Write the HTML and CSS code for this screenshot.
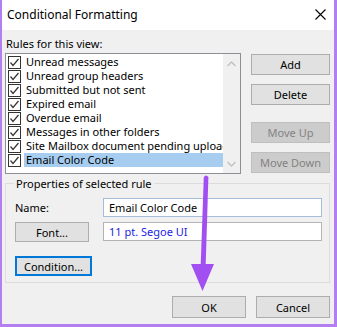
FILE: index.html
```html
<!DOCTYPE html>
<html lang="en">
<head>
  <meta charset="UTF-8" />
  <title>Conditional Formatting</title>
  <link rel="stylesheet" href="styles.css">
</head>
<body>

  <div class="window">
    <div class="titlebar">
      <span class="title">Conditional Formatting</span>
      <svg class="close" width="11" height="11" viewBox="0 0 11 11">
        <path d="M0.5 0.5 L10.5 10.5 M10.5 0.5 L0.5 10.5" stroke="#000" stroke-width="1.1" fill="none"/>
      </svg>
    </div>

    <div class="content">
      <div class="label">Rules for this view:</div>

      <div class="rules-row">
        <div class="listbox">
          <ul class="rules">
            <li><svg class="check" width="13" height="13" viewBox="0 0 13 13"><rect x="0.5" y="0.5" width="12" height="12" fill="#fff" stroke="#333"/><path d="M2.5 6.5 L5 9.5 L10.5 3" stroke="#333" stroke-width="1.2" fill="none"/></svg><span class="name">Unread messages</span></li>
            <li><svg class="check" width="13" height="13" viewBox="0 0 13 13"><rect x="0.5" y="0.5" width="12" height="12" fill="#fff" stroke="#333"/><path d="M2.5 6.5 L5 9.5 L10.5 3" stroke="#333" stroke-width="1.2" fill="none"/></svg><span class="name">Unread group headers</span></li>
            <li><svg class="check" width="13" height="13" viewBox="0 0 13 13"><rect x="0.5" y="0.5" width="12" height="12" fill="#fff" stroke="#333"/><path d="M2.5 6.5 L5 9.5 L10.5 3" stroke="#333" stroke-width="1.2" fill="none"/></svg><span class="name">Submitted but not sent</span></li>
            <li><svg class="check" width="13" height="13" viewBox="0 0 13 13"><rect x="0.5" y="0.5" width="12" height="12" fill="#fff" stroke="#333"/><path d="M2.5 6.5 L5 9.5 L10.5 3" stroke="#333" stroke-width="1.2" fill="none"/></svg><span class="name">Expired email</span></li>
            <li><svg class="check" width="13" height="13" viewBox="0 0 13 13"><rect x="0.5" y="0.5" width="12" height="12" fill="#fff" stroke="#333"/><path d="M2.5 6.5 L5 9.5 L10.5 3" stroke="#333" stroke-width="1.2" fill="none"/></svg><span class="name">Overdue email</span></li>
            <li><svg class="check" width="13" height="13" viewBox="0 0 13 13"><rect x="0.5" y="0.5" width="12" height="12" fill="#fff" stroke="#333"/><path d="M2.5 6.5 L5 9.5 L10.5 3" stroke="#333" stroke-width="1.2" fill="none"/></svg><span class="name">Messages in other folders</span></li>
            <li><svg class="check" width="13" height="13" viewBox="0 0 13 13"><rect x="0.5" y="0.5" width="12" height="12" fill="#fff" stroke="#333"/><path d="M2.5 6.5 L5 9.5 L10.5 3" stroke="#333" stroke-width="1.2" fill="none"/></svg><span class="name">Site Mailbox document pending upload</span></li>
            <li class="selected"><svg class="check" width="13" height="13" viewBox="0 0 13 13"><rect x="0.5" y="0.5" width="12" height="12" fill="#fff" stroke="#333"/><path d="M2.5 6.5 L5 9.5 L10.5 3" stroke="#333" stroke-width="1.2" fill="none"/></svg><span class="name">Email Color Code</span></li>
          </ul>
          <div class="scrollbar">
            <svg width="17" height="17" viewBox="0 0 17 17"><path d="M4.5 10 L8.5 6 L12.5 10" stroke="#c2c2c2" stroke-width="1.4" fill="none"/></svg>
            <svg width="17" height="17" viewBox="0 0 17 17"><path d="M4.5 7 L8.5 11 L12.5 7" stroke="#c2c2c2" stroke-width="1.4" fill="none"/></svg>
          </div>
        </div>

        <div class="side-buttons">
          <button class="btn">Add</button>
          <button class="btn">Delete</button>
          <button class="btn disabled">Move Up</button>
          <button class="btn disabled">Move Down</button>
        </div>
      </div>

      <div class="group">
        <div class="group-title">Properties of selected rule</div>
        <div class="field-row">
          <span class="field-label">Name:</span>
          <div class="textbox name-box">Email Color Code</div>
        </div>
        <div class="field-row font-row">
          <button class="btn font-btn">Font...</button>
          <div class="textbox font-box">11 pt. Segoe UI</div>
        </div>
        <button class="btn condition-btn">Condition...</button>
      </div>

      <div class="footer">
        <button class="btn">OK</button>
        <button class="btn">Cancel</button>
      </div>
    </div>

    <!-- annotation arrow -->
    <svg class="arrow" width="337" height="327" viewBox="0 0 337 327">
      <path d="M203.8 177 Q206 174 208.4 177 L205.6 268 L200.6 268 Z" fill="#a24ff2"/>
      <path d="M191 264 L214 264 L202.5 291 Z" fill="#a24ff2"/>
    </svg>
  </div>

</body>
</html>
```

FILE: styles.css
```css
/* ---------------- GENERAL ---------------- */
html, body {
  margin: 0;
  background: #f0f0f0;
}

body {
  font-family: 'Noto Sans', 'Open Sans', sans-serif;
  font-size: 11px;
  color: #000;
}

.window {
  position: relative;
  width: 337px;
  height: 327px;
  box-sizing: border-box;
  border-left: 2px solid #b27ef0;
  border-right: 3px solid #b27ef0;
  border-bottom: 3px solid #b27ef0;
  background: #f0f0f0;
  display: flex;
  flex-direction: column;
}

/* ---------------- TITLE BAR ---------------- */
.titlebar {
  height: 30px;
  flex-shrink: 0;
  background: #fff;
  display: flex;
  align-items: center;
  justify-content: space-between;
  padding: 0 8px 0 5px;
}

.title {
  font-size: 12px;
  line-height: 16px;
  padding-bottom: 1px;
}

.close {
  display: block;
  margin-bottom: 2px;
}

/* ---------------- CONTENT ---------------- */
.content {
  padding: 6px 4px 0 3px;
}

.label {
  line-height: 15px;
  padding-left: 1px;
}

.rules-row {
  display: flex;
  gap: 10px;
  margin-top: 2px;
}

.listbox {
  width: 236px;
  height: 121px;
  box-sizing: border-box;
  border: 1px solid #8c8f96;
  background: #fff;
  display: flex;
}

.rules {
  list-style: none;
  margin: 0;
  padding: 1px 0 0 2px;
  flex: 1;
  overflow: hidden;
}

.rules li {
  display: flex;
  align-items: center;
  height: 14px;
  white-space: nowrap;
}

.check {
  flex-shrink: 0;
  margin-right: 3px;
}

.name {
  flex: 1;
  line-height: 14px;
  padding-left: 2px;
  overflow: hidden;
}

.selected .name {
  background: #a6cdf0;
}

.scrollbar {
  width: 17px;
  background: #f0f0f0;
  display: flex;
  flex-direction: column;
  justify-content: space-between;
  padding: 2px 0 1px;
}

.scrollbar svg {
  display: block;
}

/* ---------------- BUTTONS ---------------- */
.btn {
  font-family: inherit;
  font-size: 11px;
  color: #000;
  background: #e1e1e1;
  border: 1px solid #adadad;
  margin: 0;
  padding: 0;
  height: 21px;
  line-height: 17px;
}

.btn.disabled {
  background: #cccccc;
  border-color: #bfbfbf;
  color: #838383;
}

.side-buttons {
  width: 79px;
  display: flex;
  flex-direction: column;
}

.side-buttons .btn {
  margin-top: 9px;
}

.side-buttons .btn:first-child {
  margin-top: 1px;
}

.side-buttons .btn:nth-child(3) {
  margin-top: 17px;
}

/* ---------------- PROPERTIES GROUP ---------------- */
.group {
  margin-top: 9px;
  border: 1px solid #dcdcdc;
  padding: 0 7px 6px 9px;
  display: flex;
  flex-direction: column;
  align-items: flex-start;
}

.group-title {
  margin: -8px 0 0 -1px;
  padding: 0 2px;
  background: #f0f0f0;
  line-height: 15px;
}

.field-row {
  display: flex;
  align-items: center;
  width: 100%;
  margin-top: 7px;
}

.field-label {
  width: 88px;
  padding-left: 0;
}

.textbox {
  flex: 1;
  height: 19px;
  box-sizing: border-box;
  background: #fff;
  padding-left: 5px;
  line-height: 17px;
}

.name-box {
  border: 1px solid #a6bdd9;
}

.font-row {
  margin-top: 5px;
  align-items: flex-start;
}

.font-btn {
  width: 74px;
  height: 20px;
  margin-right: 14px;
}

.font-box {
  border: 1px solid #b4b4b4;
  color: #1c1ce4;
}

.condition-btn {
  margin-top: 14px;
  width: 77px;
  height: 20px;
  border: 2px solid #0078d7;
  line-height: 15px;
}

/* ---------------- FOOTER ---------------- */
.footer {
  display: flex;
  justify-content: flex-end;
  gap: 10px;
  margin-top: 13px;
}

.footer .btn {
  width: 74px;
  height: 22px;
}

/* ---------------- ANNOTATION ---------------- */
.arrow {
  position: absolute;
  left: -2px;
  top: 0;
  pointer-events: none;
}
```
